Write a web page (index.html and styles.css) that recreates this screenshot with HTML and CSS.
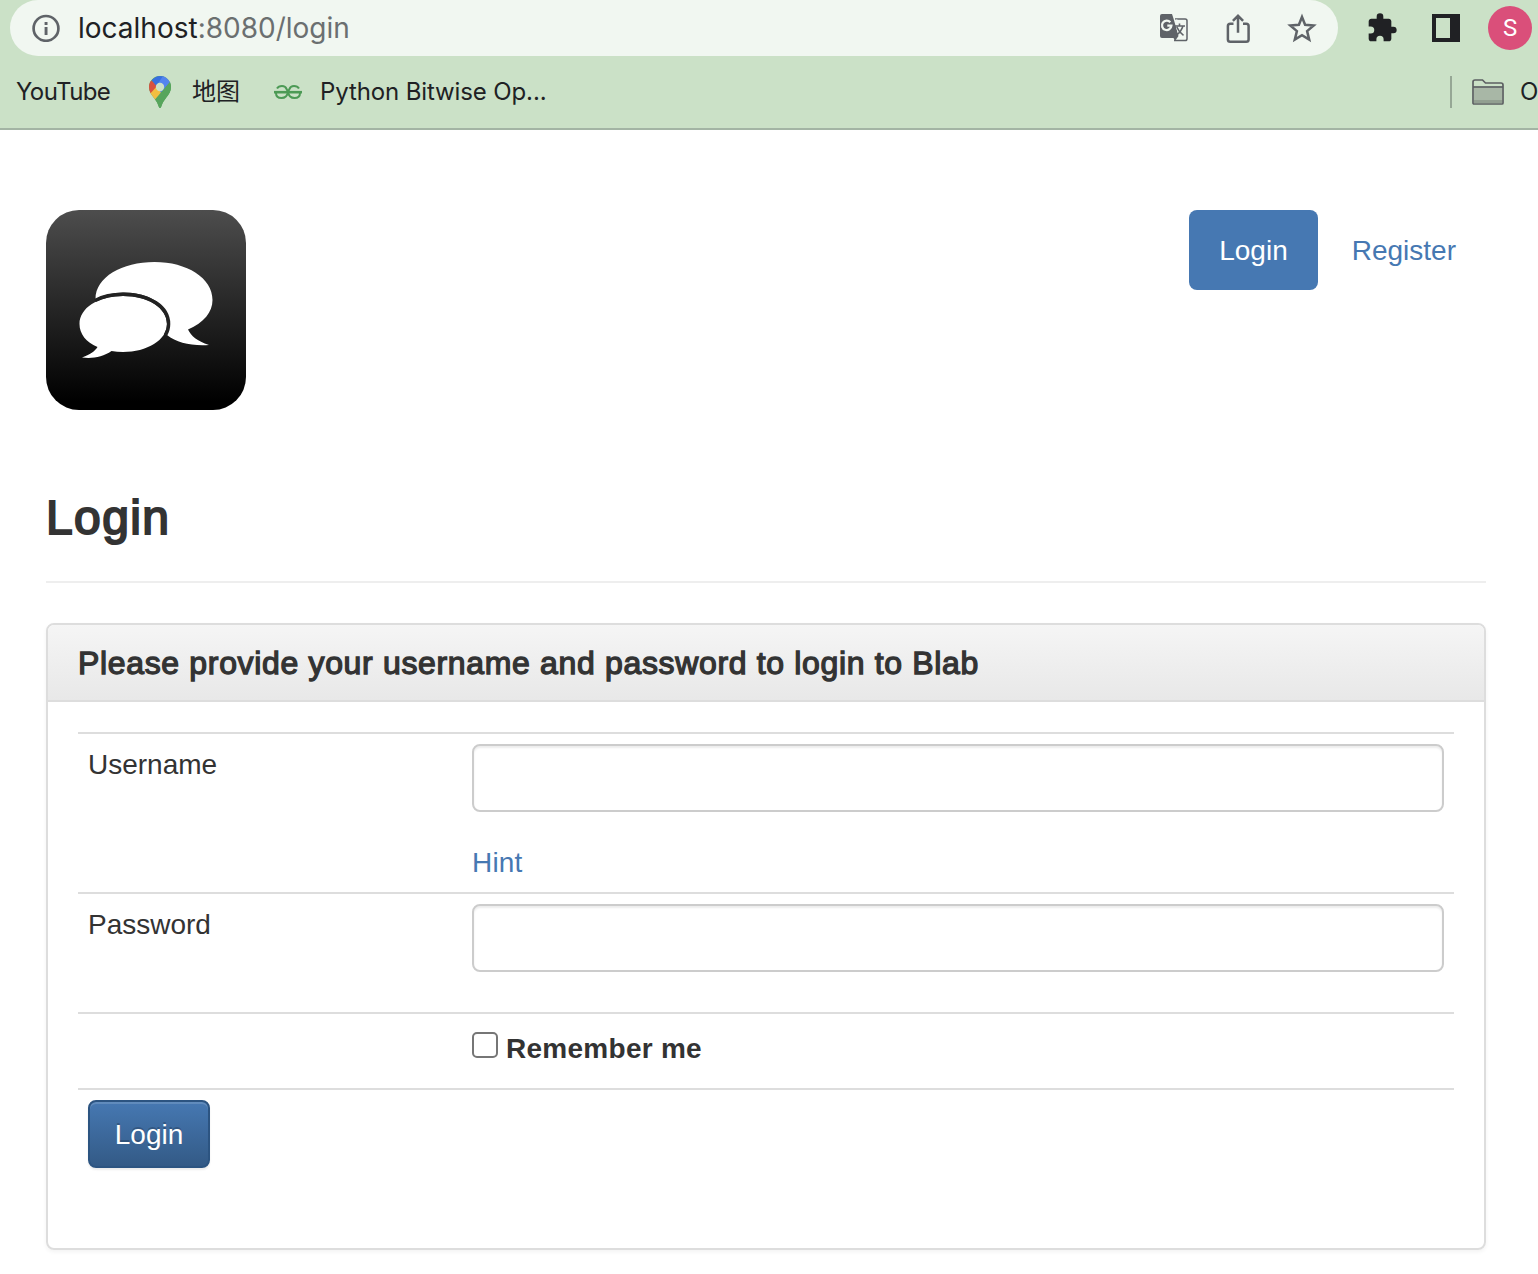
FILE: index.html
```html
<!DOCTYPE html>
<html lang="en">
<head>
<meta charset="utf-8">
<title>Blab - Login</title>
<link rel="stylesheet" href="styles.css">
</head>
<body>
<div class="browser">
  <div class="toolbar">
    <div class="omnibox">
      <svg class="info" width="28" height="28" viewBox="0 0 28 28"><circle cx="14" cy="14.400" r="12.400" fill="none" stroke="#5f6368" stroke-width="2.700"/><path d="M12.600 8h2.900v3h-2.900zM12.600 13h2.900v8h-2.900z" fill="#5f6368"/></svg>
      <span class="url"><span class="host">localhost</span>:8080/login</span>
      <svg class="icon" width="32" height="32" viewBox="0 0 32 32">
        <path d="M17 6.500h10.200q1.800 0 1.800 1.800v17.900q0 1.800-1.800 1.800H16" transform="translate(0 .5)" fill="none" stroke="#5f6368" stroke-width="1.500"/>
        <path d="M4 2h10l1.500 4.500L20.500 24l-3.500 5L15.500 26H4q-2 0-2-2V4q0-2 2-2z" fill="#5f6368"/>
        <path d="M17.500 7.500h2l-1 4zM18 15h3v9z" fill="#f1f7f1"/>
        <path d="M12.300 10.300A4.700 4.700 0 1 0 13.400 13.700H9.300" fill="none" stroke="#f1f7f1" stroke-width="2.300"/>
        <path d="M17 14h10M21.500 11.500v2.500M25 14q-2 6-6.500 9M18.800 15q2 5 6.700 8.300" fill="none" stroke="#5f6368" stroke-width="1.600"/>
      </svg>
      <svg class="icon" width="32" height="32" viewBox="0 0 32 32"><path d="M11.500 11.200H8.300q-2.400 0-2.400 2.400v13.800q0 2.400 2.400 2.400h15.900q2.400 0 2.400-2.400V13.600q0-2.400-2.400-2.400h-3.200M16 20.500V4M10.900 8.200L16 3l5.100 5.200" transform="translate(0 .9) scale(1 .97)" fill="none" stroke="#5f6368" stroke-width="2.500"/></svg>
      <svg class="icon" width="32" height="32" viewBox="0 0 32 32"><path d="M16 5l3.100 7.800 8.600.7-6.600 5.600 2.100 8.500-7.200-4.500-7.200 4.500 2.100-8.500-6.600-5.600 8.600-.7z" fill="none" stroke="#5f6368" stroke-width="2.500"/></svg>
    </div>
    <svg class="puzzle" width="32" height="32" viewBox="0 0 24 24"><path fill="#202124" d="M20.500 11H19V7c0-1.100-.9-2-2-2h-4V3.500a2.500 2.500 0 0 0-5 0V5H4c-1.100 0-1.990.9-1.990 2v3.800H3.500a2.700 2.700 0 0 1 0 5.400H2V20c0 1.100.9 2 2 2h3.800v-1.500a2.700 2.700 0 0 1 5.400 0V22H17c1.100 0 2-.9 2-2v-4h1.500a2.500 2.500 0 0 0 0-5z"/></svg>
    <div class="sidepanel"></div>
    <div class="avatar">S</div>
  </div>
  <div class="bookmarks">
    <span class="bm youtube">YouTube</span>
    <svg class="pin" width="22" height="32" viewBox="0 0 22 32">
      <defs><clipPath id="pin"><path d="M11 0a11 11 0 0 1 11 11c0 4.500-2 7.300-5 11-2.700 3.400-4 6-4.700 8.600-.6 1.900-2 1.900-2.600 0C9 28 7.700 25.400 5 22c-3-3.700-5-6.500-5-11A11 11 0 0 1 11 0z"/></clipPath></defs>
      <g clip-path="url(#pin)"><path fill="#57a55c" d="M0 0h22v32H0z"/><path fill="#f2be42" d="M-2 20L12 5l4 9L4 26z"/><path fill="#d85140" d="M0 3l9 6-9 10z"/><path fill="#3870e0" d="M2.500 4L8 0h8L7 9.700z"/><path fill="#5384ee" d="M14 0h8v6.500L12 17 8 9z"/><path fill="#57a55c" d="M20.800 6L6 23.500V32h16V6z"/></g>
      <circle cx="11" cy="11" r="4.200" fill="#cbe1c7"/>
    </svg>
    <span class="bm maps">地图</span>
    <svg class="geeks" width="28" height="16" viewBox="0 0 28 16" fill="none" stroke="#4c9a55"><path d="M3 4.500Q4.500 2 8 2t4.500 3L14 7.500 15.500 5Q16.500 2 20 2t5 2.500M2 9q0 5 5.500 5t6.500-6q1 6 6.500 6T26 9" stroke-width="2"/><path d="M0 8.200h28" stroke-width="2.600"/></svg>
    <span class="bm python">Python Bitwise Op...</span>
    <span class="divider"></span>
    <svg class="folder" width="32" height="26" viewBox="0 0 32 26"><path d="M1 24V3q0-2 2-2h7.500l3 3H29q2 0 2 2v18q0 1-1 1H2q-1 0-1-1z" fill="#cbe1c7" stroke="#5c5f62" stroke-width="1.700"/><path d="M2 8.500h28V24H2z" fill="#a8b7a6"/><path d="M2 21h28v3H2z" fill="#929f91"/><path d="M1 8h30" stroke="#5c5f62" stroke-width="1.700"/></svg>
    <span class="bm other">O</span>
  </div>
</div>
<main class="page">
  <header class="masthead">
    <svg class="logo" width="200" height="200" viewBox="0 0 200 200">
      <defs><linearGradient id="shade" x2="0" y2="1"><stop stop-color="#4d4d4d"/><stop offset=".96" stop-color="#000"/></linearGradient></defs>
      <rect width="200" height="200" rx="33" fill="url(#shade)"/>
      <path fill="#fff" d="M49.500 89C49.500 67 76 52 108.500 52S166.500 68 166.500 90C166.500 102 158 112.500 142 119.500C145 126 151 131 163 135C145 136 131 133 121 125C130 104 112 82 77 82.500Q62 82.500 49.500 89z"/>
      <path fill="#fff" d="M77 86C102 86 121 98 121 114S101 142 77 142Q71 142 65.500 141C57 147 46 149 36 147.500C45 144 49 141 51.500 137C40 132 33.500 124 33.500 114C33.500 98 52 86 77 86z"/>
      <path d="M49 90.500Q61 84.300 77 84.300C104 84.300 122.600 97 122.600 114Q122.600 120 119.500 125" fill="none" stroke="#222" stroke-width="3.400"/>
    </svg>
    <nav class="nav"><a class="pill active">Login</a><a class="pill">Register</a></nav>
  </header>
  <h1 class="title">Login</h1>
  <section class="panel">
    <div class="panel-heading"><h2 class="panel-title">Please provide your username and password to login to Blab</h2></div>
    <form class="form">
      <div class="row username"><label class="label" for="user">Username</label><div class="field"><input class="control" id="user" type="text"><a class="hint">Hint</a></div></div>
      <div class="row password"><label class="label" for="pass">Password</label><div class="field"><input class="control" id="pass" type="password"></div></div>
      <div class="row remember"><div class="field check"><input class="checkbox" id="remember" type="checkbox"><label class="remember-label" for="remember">Remember me</label></div></div>
      <div class="row submit"><button class="button" type="button">Login</button></div>
    </form>
  </section>
</main>
</body>
</html>
```
FILE: styles.css
```css
* { box-sizing: border-box; }
body {
  margin: 0;
  height: 1274px;
  overflow: hidden;
  background: #fff;
  color: #333;
  font: 28px/40px "Liberation Sans", Arial, sans-serif;
}
svg { display: block; flex: none; }
h1, h2 { margin: 0; font-weight: normal; }

.browser {
  height: 130px;
  background: #cbe1c7;
  border-bottom: 2px solid #a3b4a4;
  color: #202124;
  font-family: Inter, "Noto Sans CJK SC", sans-serif;
  overflow: hidden;
}
.toolbar { display: flex; align-items: center; height: 56px; padding-left: 10px; }
.omnibox {
  display: flex;
  align-items: center;
  width: 1328px;
  height: 56px;
  padding: 0 20px 0 22px;
  border-radius: 28px;
  background: #f1f7f1;
}
.url { margin-left: 18px; margin-right: auto; color: #6b6f70; font-size: 28px; letter-spacing: 0; white-space: nowrap; }
.host { color: #202124; }
.icon { margin-left: 32px; }
.puzzle { margin-left: 28px; }
.sidepanel { flex: none; width: 28px; height: 28px; margin-left: 34px; border: 4px solid #202124; border-right-width: 10px; }
.avatar {
  flex: none;
  width: 44px;
  height: 44px;
  margin-left: 28px;
  border-radius: 50%;
  background: #da4f7a;
  color: #fff;
  font-family: Roboto, sans-serif;
  font-size: 24px;
  line-height: 45px;
  text-align: center;
}
.bookmarks { display: flex; align-items: center; height: 72px; padding-left: 16px; white-space: nowrap; }
.bm { flex: none; font-size: 24px; line-height: 32px; }
.youtube { width: 95px; letter-spacing: -.6px; }
.pin { margin-left: 38px; }
.maps { width: 50px; margin-left: 21px; }
.geeks { margin-left: 32px; }
.python { margin-left: 18px; letter-spacing: -.12px; }
.divider { width: 2px; height: 32px; margin-left: auto; background: #96a795; }
.folder { margin-left: 20px; }
.other { width: 18px; margin-left: 16px; letter-spacing: -1px; }

.page { padding: 80px 52px 0 46px; }
.masthead { display: flex; justify-content: space-between; height: 200px; }
.nav { display: flex; gap: 4px; }
.pill { height: 80px; padding: 21px 30px 19px; border-radius: 8px; color: #4678b2; }
.active { background: #4678b2; color: #fff; }
.title {
  height: 173px;
  padding-top: 81px;
  border-bottom: 2px solid #eee;
  font-size: 48px;
  line-height: 53px;
  letter-spacing: 1.4px;
  -webkit-text-stroke: 2px #333;
}

.panel {
  height: 627px;
  margin-top: 40px;
  border: 2px solid #ddd;
  border-radius: 8px;
  box-shadow: 0 2px 4px rgba(0, 0, 0, .05);
}
.panel-heading {
  height: 77px;
  padding: 20px 30px;
  border-bottom: 2px solid #ddd;
  border-radius: 6px 6px 0 0;
  background: linear-gradient(#f5f5f5, #e8e8e8);
}
.panel-title { font-size: 32px; line-height: 36px; letter-spacing: .66px; white-space: nowrap; -webkit-text-stroke: 1.3px #333; }
.form { padding: 30px; }
.row { display: flex; border-top: 2px solid #ddd; padding: 10px; }
.username { height: 160px; }
.password { height: 120px; }
.remember { height: 76px; padding-left: 394px; }
.label { width: 384px; padding-top: 1px; }
.field { display: flex; flex-direction: column; align-items: flex-start; width: 972px; }
.control {
  flex: none;
  width: 972px;
  height: 68px;
  margin: 0 0 30px;
  padding: 12px 24px;
  border: 2px solid #ccc;
  border-radius: 8px;
  background: #fff;
  box-shadow: inset 0 2px 2px rgba(0, 0, 0, .075);
  font: inherit;
}
.hint { padding-top: 1px; color: #4678b2; letter-spacing: .2px; }
.check { flex-direction: row; }
.checkbox { appearance: none; width: 26px; height: 26px; margin: 8px 8px 0 0; border: 2px solid #767676; border-radius: 5px; background: #fff; }
.remember-label { padding-top: 5px; font-weight: bold; letter-spacing: .27px; }
.button {
  width: 122px;
  height: 68px;
  padding: 2px 0 0;
  border: 2px solid #2c5481;
  border-radius: 8px;
  background: linear-gradient(#4678b2, #335a86);
  box-shadow: inset 0 2px 0 rgba(255, 255, 255, .15), 0 2px 2px rgba(0, 0, 0, .075);
  color: #fff;
  font: inherit;
  text-shadow: 0 -2px 0 rgba(0, 0, 0, .2);
}
```
